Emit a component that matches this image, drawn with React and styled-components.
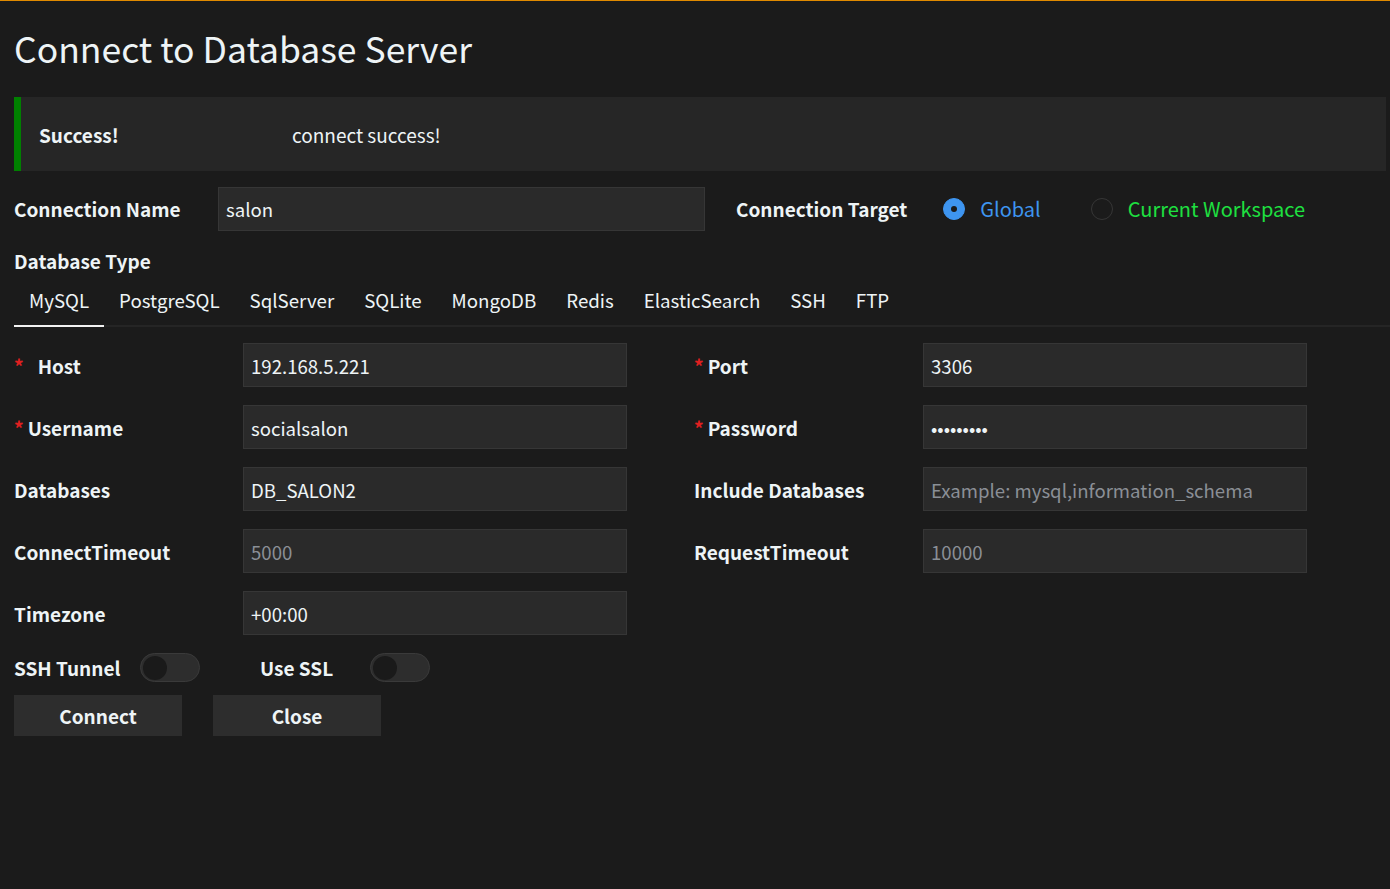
import React from 'react';
import styled, { createGlobalStyle } from 'styled-components';

const Global = createGlobalStyle`
    html, body {
        margin: 0;
        padding: 0;
        background: #1b1b1b;
    }
    body {
        font-family: "Noto Sans CJK KR", "Noto Sans", sans-serif;
        color: #eef4f6;
    }
`;

const Page = styled.div`
    min-height: 889px;
    border-top: 1px solid #e08a00;
    padding: 0 4px 0 14px;
    box-sizing: border-box;
`;

const Title = styled.h1`
    margin: 0;
    padding-top: 23px;
    height: 96px;
    box-sizing: border-box;
    font-size: 35.5px;
    font-weight: 400;
    line-height: 48px;
`;

const Alert = styled.div`
    display: flex;
    align-items: center;
    height: 74px;
    background: #262626;
    border-left: 7px solid #008000;
    padding-left: 18px;
    font-size: 19px;
`;

const AlertTitle = styled.b`
    width: 253px;
`;

const InlineRow = styled.div`
    display: flex;
    align-items: center;
    height: 43px;
    margin-top: 16px;
`;

const Label = styled.label`
    font-size: 19px;
    font-weight: 700;
    width: ${p => p.width || 'auto'};
    margin-left: ${p => p.offset || '0'};
    flex-shrink: 0;
    white-space: nowrap;
`;

const Star = styled.span`
    color: #e02020;
    margin-right: ${p => p.gap || '4px'};
`;

const Input = styled.input`
    box-sizing: border-box;
    width: ${p => p.width || '384px'};
    height: 44px;
    background: #2a2a2a;
    border: 1px solid #363636;
    color: #eef4f6;
    font-family: inherit;
    font-size: 18.6px;
    padding: 0 7px;
    outline: none;
    &::placeholder {
        color: #8a8f96;
    }
`;

const RadioGroup = styled.div`
    display: flex;
    align-items: center;
    margin-left: 36px;
`;

const RadioItem = styled.div`
    display: flex;
    align-items: center;
    font-size: 20px;
    color: ${p => p.color};
    margin-right: 50px;
`;

const RadioDot = styled.span`
    width: 22px;
    height: 22px;
    border-radius: 50%;
    box-sizing: border-box;
    margin-right: 15px;
    background: ${p => (p.checked ? '#3e95f0' : 'transparent')};
    border: 1px solid ${p => (p.checked ? '#3e95f0' : '#363636')};
    display: flex;
    align-items: center;
    justify-content: center;
    &::after {
        content: '';
        width: 6px;
        height: 6px;
        border-radius: 50%;
        background: ${p => (p.checked ? '#1b1b1b' : 'transparent')};
    }
`;

const SectionLabel = styled(Label)`
    display: block;
    margin-top: 18px;
    line-height: 26px;
`;

const Tabs = styled.div`
    display: flex;
    margin-top: 13px;
    border-bottom: 2px solid #252525;
    margin-right: -4px;
`;

const Tab = styled.div`
    padding: 0 15px;
    height: 40px;
    line-height: 26px;
    font-size: 18.7px;
    border-bottom: 2px solid ${p => (p.active ? '#f2f2f2' : 'transparent')};
    margin-bottom: -2px;
    box-sizing: border-box;
`;

const FormGrid = styled.div`
    display: grid;
    grid-template-columns: 229px 384px 67px 229px 384px;
    row-gap: 18px;
    margin-top: 16px;
    align-items: center;
`;

const Spacer = styled.div``;

const SwitchRow = styled.div`
    display: flex;
    align-items: center;
    margin-top: 18px;
    height: 29px;
`;

const Switch = styled.span`
    width: 60px;
    height: 29px;
    border-radius: 15px;
    background: #2d2d2d;
    border: 1px solid #3a3a3a;
    box-sizing: border-box;
    display: flex;
    align-items: center;
    padding-left: 2px;
    flex-shrink: 0;
    &::before {
        content: '';
        width: 24px;
        height: 24px;
        border-radius: 50%;
        background: #1a1a1a;
    }
`;

const Buttons = styled.div`
    display: flex;
    gap: 31px;
    margin-top: 13px;
`;

const Button = styled.button`
    width: 168px;
    height: 41px;
    background: #2d2d2d;
    color: #eef4f6;
    border: none;
    font-family: inherit;
    font-size: 19px;
    font-weight: 700;
`;

const fields = [
    [{ label: 'Host', req: true, gap: '14px', value: '192.168.5.221' }, { label: 'Port', req: true, value: '3306' }],
    [{ label: 'Username', req: true, value: 'socialsalon' }, { label: 'Password', req: true, value: 'socialsal', type: 'password' }],
    [{ label: 'Databases', value: 'DB_SALON2' }, { label: 'Include Databases', placeholder: 'Example: mysql,information_schema' }],
    [{ label: 'ConnectTimeout', placeholder: '5000' }, { label: 'RequestTimeout', placeholder: '10000' }],
    [{ label: 'Timezone', value: '+00:00' }, null],
];

const Field = ({ f }) => (
    <>
        <Label>
            {f.req && <Star gap={f.gap}>*</Star>}
            {f.label}
        </Label>
        <Input type={f.type || 'text'} defaultValue={f.value} placeholder={f.placeholder} />
    </>
);

const tabs = ['MySQL', 'PostgreSQL', 'SqlServer', 'SQLite', 'MongoDB', 'Redis', 'ElasticSearch', 'SSH', 'FTP'];

export default function App() {
    return (
        <Page>
            <Global />
            <Title>Connect to Database Server</Title>
            <Alert>
                <AlertTitle>Success!</AlertTitle>
                <span>connect success!</span>
            </Alert>
            <InlineRow>
                <Label width="204px">Connection Name</Label>
                <Input width="487px" defaultValue="salon" />
                <Label offset="31px">Connection Target</Label>
                <RadioGroup>
                    <RadioItem color="#3e95f0">
                        <RadioDot checked />
                        Global
                    </RadioItem>
                    <RadioItem color="#1ee040">
                        <RadioDot />
                        Current Workspace
                    </RadioItem>
                </RadioGroup>
            </InlineRow>
            <SectionLabel>Database Type</SectionLabel>
            <Tabs>
                {tabs.map((t, i) => (
                    <Tab key={t} active={i === 0}>{t}</Tab>
                ))}
            </Tabs>
            <FormGrid>
                {fields.map((row, i) => (
                    <React.Fragment key={i}>
                        <Field f={row[0]} />
                        <Spacer />
                        {row[1] ? <Field f={row[1]} /> : <><Spacer /><Spacer /></>}
                    </React.Fragment>
                ))}
            </FormGrid>
            <SwitchRow>
                <Label width="126px">SSH Tunnel</Label>
                <Switch />
                <Label width="110px" offset="60px">Use SSL</Label>
                <Switch />
            </SwitchRow>
            <Buttons>
                <Button>Connect</Button>
                <Button>Close</Button>
            </Buttons>
        </Page>
    );
}
